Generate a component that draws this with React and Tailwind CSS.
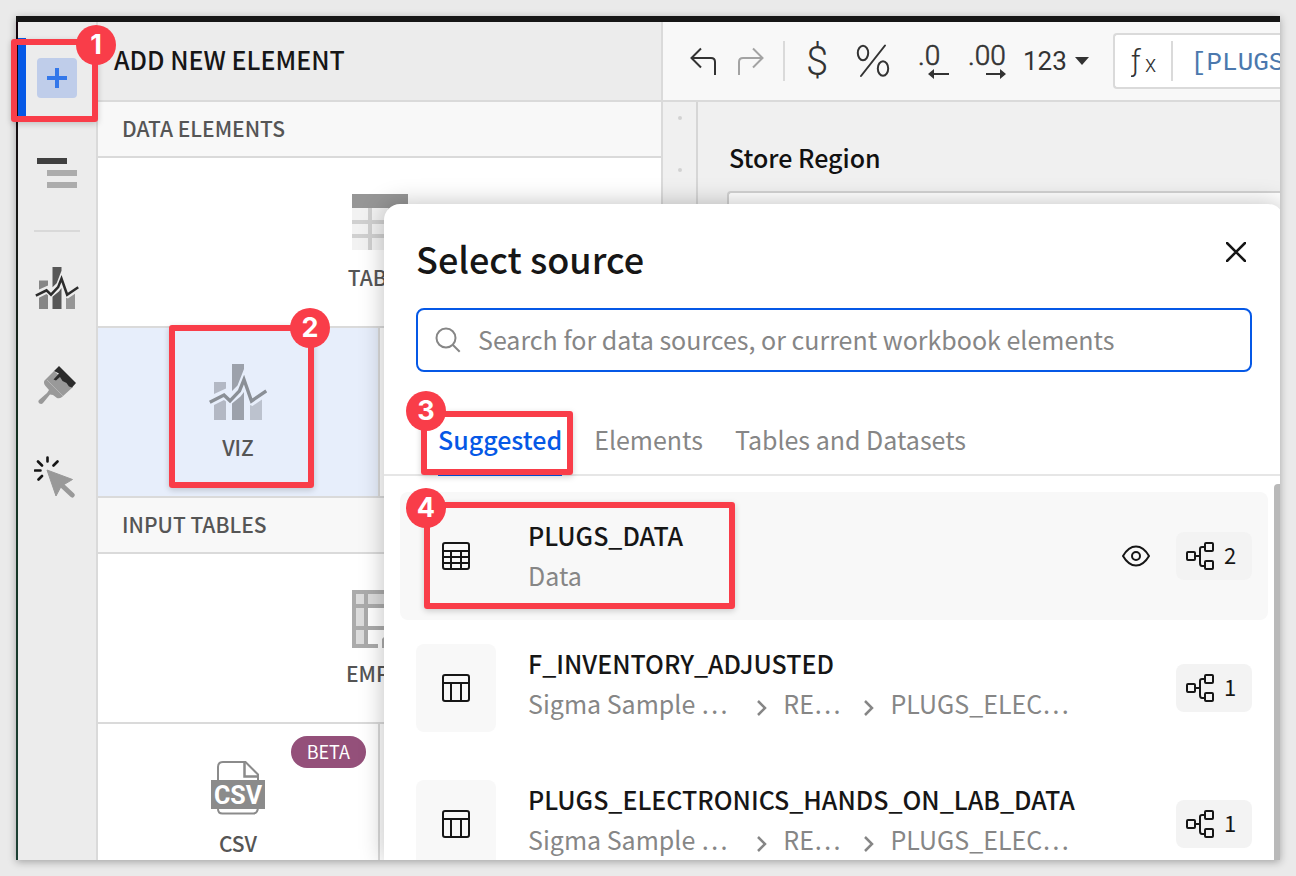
import React from "react";

function VizIcon({ className, line, a, b, c }) {
  return (
    <svg viewBox="0 0 58 56" className={className} aria-hidden="true">
      <path d="M5 18h12v6.500l-12 5.500zM5 41l10-5 2 1.500V56H5z" fill={a} />
      <path d="M23 0h12v5l-6.500 16.500L23 27zM23 39.500l8.500-7L35 28v28H23z" fill={b} />
      <path d="M41 41l2.500 1L53 35.500V56H41z" fill={c} />
      <path d="M.8 38.200 15 31l6 5.800 9.500-10L35 15.500l7.500 21.500L57.300 27" fill="none" stroke={line} strokeWidth="3.400" />
    </svg>
  );
}

function BrushIcon() {
  return (
    <svg viewBox="0 0 38 38" className="h-[38px] w-[38px]" aria-hidden="true">
      <path d="M16 5 6.500 14.500Q5 17 7.500 20l3.500 4-2 3-8 7Q-.5 36 1.500 37.500q2 1.200 3.500-.5L12 28.500l3 .5 4 3q2.500.8 5-1L35 21z" fill="#999" />
      <path d="M21 0l17 17-4 4.500-3-1-2.500-3.500-4-2L22 11l-4 3.500-2.500-1L21 7.500 16 5z" fill="#2c2c2c" />
      <path d="M9 14l16 16" stroke="#c4c4c4" strokeWidth=".6" />
    </svg>
  );
}

function ClickIcon() {
  return (
    <svg viewBox="0 0 42 42" className="h-[42px] w-[42px]" aria-hidden="true">
      <path d="M13 14 38.500 23.500 30 28.500 26.500 31.500 22 40z" fill="#999" stroke="#999" strokeLinejoin="round" />
      <path d="M28 29.500 38.200 39" stroke="#999" strokeWidth="5" strokeLinecap="round" />
      <path d="M13.500 1.500v4M4 5.500l4 4M23.500 5.500l-4 4M1 14.500h5.500M8 20l-3.500 3.500" stroke="#151515" strokeWidth="2.600" strokeLinecap="round" />
    </svg>
  );
}

function TableIcon() {
  return (
    <svg viewBox="0 0 56 56" className="h-14 w-14" aria-hidden="true">
      <path d="M0 14h56v42H0z" fill="#f2f2f2" />
      <path d="M18 14v42M38 14v42M0 28h56M0 42h56" stroke="#d0d0d0" strokeWidth="4" />
      <path d="M0 0h56v14H0z" fill="#969696" />
    </svg>
  );
}

function EmptyIcon() {
  return (
    <svg viewBox="0 0 56 58" className="-mb-0.5 h-[58px] w-14" aria-hidden="true">
      <path d="M2 2h52v14H14v40H2z" fill="#dcdcdc" />
      <path d="M26 56H2V2h52v26M14 2v54M2 16h52M2 38h38" fill="none" stroke="#ababab" strokeWidth="4" />
      <path d="M30 58v-9l18-18 8 8-18 19z" fill="#ababab" />
    </svg>
  );
}

function CsvIcon() {
  return (
    <svg viewBox="0 0 54 56" className="h-14 w-[54px]" aria-hidden="true">
      <path d="M7 24V7q0-5 5-5h22.500L47 14.500V46q0 7.500-4.500 7.500h-31Q7 53.500 7 49z" fill="#fff" stroke="#8b8b8b" strokeWidth="2" />
      <path d="M33.500 2v14.500H47" fill="none" stroke="#8b8b8b" strokeWidth="2.500" />
      <path d="M0 20h54v29H0z" fill="#8b8b8b" />
      <text x="27" y="44" textAnchor="middle" fill="#fff" fontFamily="'Liberation Sans Narrow', Roboto, sans-serif" fontWeight="700" fontSize="25">CSV</text>
    </svg>
  );
}

function GridIcon({ dense }) {
  return (
    <svg viewBox="0 0 28 28" className="h-7 w-7" fill="none" stroke="#161616" strokeWidth="2" aria-hidden="true">
      <rect x="1" y="1" width="26" height="26" rx="2" />
      <path d={dense ? "M1 9h26M1 15h26M1 21h26M9 9v18M19 9v18" : "M1 9h26M9 9v18M19 9v18"} />
    </svg>
  );
}

function LineageIcon() {
  return (
    <svg viewBox="0 0 28 28" className="h-7 w-7" fill="none" stroke="#161616" strokeWidth="2" aria-hidden="true">
      <rect x="1" y="10" width="8" height="8" rx="1" />
      <rect x="19" y="1" width="8" height="8" rx="1" />
      <rect x="19" y="19" width="8" height="8" rx="1" />
      <path d="M9 14h5M19 5h-3q-2 0-2 2v14q0 3 2 3h3" />
    </svg>
  );
}

function EyeIcon() {
  return (
    <svg viewBox="0 0 28 28" className="h-7 w-7" fill="none" stroke="#161616" strokeWidth="2" aria-hidden="true">
      <path d="M1 14Q6.500 4.500 14 4.500T27 14Q21.500 23.500 14 23.500T1 14z" strokeLinejoin="round" />
      <circle cx="14" cy="14" r="4" />
    </svg>
  );
}

function Tile({ icon, label, active, badge, divided }) {
  return (
    <button
      className={
        "relative flex h-full flex-col items-center gap-[13px] pt-9 " +
        (active ? "bg-[#e7eefb] " : "bg-white ") +
        (divided ? "w-[282px] border-r-2 border-[#dadada]" : "w-full")
      }
    >
      {icon}
      <span className="text-[21px] leading-7 font-medium text-[#555]">{label}</span>
      {badge && (
        <span className="absolute top-3 right-3 flex h-8 items-center rounded-full bg-[#94507a] px-4 pb-0.5 text-[18px] leading-6 text-white">
          {badge}
        </span>
      )}
    </button>
  );
}

function SectionTitle({ children }) {
  return (
    <h3 className="flex h-14 shrink-0 items-center border-b-2 border-[#dadada] bg-[#f8f8f8] px-6 pb-0.5 text-[21px] leading-7 font-medium text-[#555]">
      {children}
    </h3>
  );
}

function Chevron() {
  return (
    <svg viewBox="0 0 10 16" className="mt-2.5 h-4 w-2.5 shrink-0" fill="none" stroke="#868686" strokeWidth="2.500" aria-hidden="true">
      <path d="M1 1l7 7-7 7" />
    </svg>
  );
}

function SourceRow({ name, path, count, selected }) {
  return (
    <li className={"flex items-center rounded-lg px-4 " + (selected ? "h-32 bg-[#f8f8f8]" : "h-[136px]")}>
      <span className="flex h-[88px] w-20 shrink-0 items-center justify-center rounded-lg bg-[#f8f8f8]">
        <GridIcon dense={selected} />
      </span>
      <a href="#source" className={"ml-8 min-w-0 flex-1 " + (selected ? "pb-0.5" : "pb-2.5")}>
        <span className="block text-[25px] leading-10 font-medium text-[#161616]">{name}</span>
        <span className="flex h-10 items-center text-[25px] leading-10 text-[#868686]">
          {path.map((part, i) => (
            <React.Fragment key={part}>
              {i > 0 && <span className={i === 1 ? "mr-4 ml-[30px]" : "mr-4 ml-6"}><Chevron /></span>}
              <span>{part}</span>
            </React.Fragment>
          ))}
        </span>
      </a>
      {selected && (
        <button aria-label="Preview" className="mr-6 p-0.5">
          <EyeIcon />
        </button>
      )}
      <button className="flex h-12 w-[76px] shrink-0 items-center gap-2.5 rounded-lg bg-[#f3f3f3] pl-2.5 text-[22px] leading-8 text-[#161616]">
        <LineageIcon />
        <span className="pb-1">{count}</span>
      </button>
    </li>
  );
}

function Callout({ n, box, dot }) {
  return (
    <div className={"pointer-events-none absolute rounded-[3px] border-6 border-[#f93d49] shadow-[0_2px_6px_rgba(0,0,0,0.18)] " + box}>
      <span
        className={
          "absolute flex h-10 w-10 items-center justify-center rounded-full bg-[#f93d49] font-[Inter,sans-serif] text-[27px] leading-8 font-bold text-white " +
          dot
        }
      >
        {n}
      </span>
    </div>
  );
}

function Sidebar() {
  return (
    <nav className="flex w-20 shrink-0 flex-col items-stretch border-r-2 border-[#dadada] bg-[#ececec] pt-4">
      <button aria-label="Add new element" className="flex h-[78px] items-center justify-center border-l-8 border-[#0558e6] pt-0.5 pr-2">
        <span className="flex h-10 w-10 items-center justify-center rounded bg-[#bfcdea]">
          <svg viewBox="0 0 20 20" className="h-5 w-5" aria-hidden="true">
            <path d="M10 0v20M0 10h20" stroke="#3377ea" strokeWidth="4" />
          </svg>
        </span>
      </button>
      <button aria-label="Page outline" className="flex h-[114px] items-center justify-center">
        <svg viewBox="0 0 40 30" className="h-[30px] w-10" aria-hidden="true">
          <path d="M0 0h30v6H0z" fill="#404040" />
          <path d="M10 12h30v6H10zM10 24h30v6H10z" fill="#acacac" />
        </svg>
      </button>
      <hr className="mx-4 border-t-2 border-[#d9d9d9]" />
      <button aria-label="Chart" className="flex h-28 items-center justify-center">
        <VizIcon className="h-[42px] w-11" line="#2c2c2c" a="#868686" b="#575757" c="#969696" />
      </button>
      <button aria-label="Format" className="flex h-20 items-center justify-center pt-0.5">
        <BrushIcon />
      </button>
      <button aria-label="Actions" className="flex h-26 items-center justify-center pt-0.5 pr-1">
        <ClickIcon />
      </button>
    </nav>
  );
}

function ElementPanel() {
  return (
    <section className="flex w-[565px] shrink-0 flex-col border-r-2 border-[#dadada] bg-white">
      <h2 className="flex h-20 shrink-0 items-center border-b-2 border-[#dadada] bg-[#ececec] px-4 pb-1 text-[25px] leading-8 font-medium text-[#161616]">
        ADD NEW ELEMENT
      </h2>
      <SectionTitle>DATA ELEMENTS</SectionTitle>
      <div className="h-[170px] shrink-0 border-b-2 border-[#dadada]">
        <Tile icon={<TableIcon />} label="TABLE" />
      </div>
      <div className="h-[170px] shrink-0 border-b-2 border-[#dadada]">
        <Tile
          active
          divided
          icon={<VizIcon className="h-14 w-[58px]" line="#8a8f96" a="#b3b8c4" b="#9ca1ab" c="#bcc2ce" />}
          label="VIZ"
        />
      </div>
      <SectionTitle>INPUT TABLES</SectionTitle>
      <div className="h-[170px] shrink-0 border-b-2 border-[#dadada]">
        <Tile icon={<EmptyIcon />} label="EMPTY" />
      </div>
      <div className="h-[170px] shrink-0">
        <Tile divided icon={<CsvIcon />} label="CSV" badge="BETA" />
      </div>
    </section>
  );
}

function Toolbar() {
  return (
    <div className="flex h-20 shrink-0 items-center border-b-2 border-[#dadada] bg-[#f8f8f8] pl-4 font-[Roboto,sans-serif] font-light text-[#333]">
      <button aria-label="Undo" className="flex w-12 shrink-0 justify-center">
        <svg viewBox="0 0 26 28" className="h-7 w-[26px]" fill="none" stroke="#333" strokeWidth="2" aria-hidden="true">
          <path d="M11 1.500 1.500 11 11 20.500M1.500 11H21q4 0 4 4V28" />
        </svg>
      </button>
      <button aria-label="Redo" className="flex w-12 shrink-0 justify-center">
        <svg viewBox="0 0 26 28" className="h-7 w-[26px]" fill="none" stroke="#a3a3a3" strokeWidth="2" aria-hidden="true">
          <path d="M15 1.500l9.500 9.500-9.500 9.500M24.500 11H5q-4 0-4 4V28" />
        </svg>
      </button>
      <span className="mx-2 h-10 w-0.5 shrink-0 bg-[#dadada]" />
      <button className="w-12 shrink-0 pt-0.5 text-[40px] leading-12">$</button>
      <button aria-label="Percent" className="flex w-16 shrink-0 justify-center">
        <svg viewBox="0 0 34 34" className="h-[34px] w-[34px]" fill="none" stroke="#333" strokeWidth="2" strokeLinecap="round" aria-hidden="true">
          <ellipse cx="7" cy="9" rx="5.200" ry="7.200" />
          <ellipse cx="27" cy="24.500" rx="5.200" ry="7.200" />
          <path d="M29 1.500 5 32" />
        </svg>
      </button>
      <button aria-label="Decrease decimals" className="flex w-[58px] shrink-0 justify-center">
        <svg viewBox="0 0 32 52" className="h-13 w-8" fill="#333" aria-hidden="true">
          <text x="0" y="30" fontSize="28" stroke="#333" strokeWidth=".6">.0</text>
          <path d="M16 38h15v2H16v4l-6-5 6-5z" />
        </svg>
      </button>
      <button aria-label="Increase decimals" className="flex w-12 shrink-0 justify-center">
        <svg viewBox="0 0 38 52" className="h-13 w-[38px]" fill="#333" aria-hidden="true">
          <text x="0" y="30" fontSize="28" stroke="#333" strokeWidth=".6">.00</text>
          <path d="M32 38H18v2h14v4l6-5-6-5z" />
        </svg>
      </button>
      <button className="ml-3 flex shrink-0 items-center gap-2 text-[26px] leading-8 font-normal">
        123
        <svg viewBox="0 0 14 8" className="h-2 w-3.5" fill="#333" aria-hidden="true">
          <path d="M0 0h14L7 8z" />
        </svg>
      </button>
      <div className="ml-6 flex h-14 min-w-0 flex-1 items-center overflow-hidden rounded-l border-2 border-r-0 border-[#dadada] bg-white">
        <svg viewBox="0 0 26 48" className="ml-4 h-12 w-[26px] shrink-0" fill="#333" role="img" aria-label="Formula">
          <text x="0" y="34" fontSize="30">ƒ</text>
          <text x="14" y="35" fontSize="23">x</text>
        </svg>
        <span className="mx-3.5 h-10 w-0.5 shrink-0 bg-[#dadada]" />
        <code className="pt-1 pl-1 font-['Liberation_Mono',monospace] text-[26px] leading-8 font-normal whitespace-nowrap text-[#4b78ad]">
          [PLUGS
        </code>
      </div>
    </div>
  );
}

function Workspace() {
  return (
    <main className="flex min-w-0 flex-1 flex-col bg-[#f0f0f0]">
      <Toolbar />
      <div className="flex min-h-0 flex-1">
        <div className="flex w-[35px] shrink-0 flex-col items-center gap-12 border-r-2 border-[#d6d6d6] pt-3.5">
          <span className="h-1 w-1 rounded-full bg-[#d2d2d2]" />
          <span className="h-1 w-1 rounded-full bg-[#d2d2d2]" />
        </div>
        <div className="flex min-w-0 flex-1 flex-col pt-[39px] pl-[29px]">
          <label htmlFor="region" className="pl-0.5 text-[25px] leading-8 font-medium text-[#111]">
            Store Region
          </label>
          <input id="region" className="mt-[18px] h-16 rounded-l border-2 border-r-0 border-[#d2d2d2] bg-white" />
        </div>
      </div>
    </main>
  );
}

const SOURCES = [
  { name: "PLUGS_DATA", path: ["Data"], count: 2, selected: true },
  { name: "F_INVENTORY_ADJUSTED", path: ["Sigma Sample …", "RE…", "PLUGS_ELEC…"], count: 1 },
  { name: "PLUGS_ELECTRONICS_HANDS_ON_LAB_DATA", path: ["Sigma Sample …", "RE…", "PLUGS_ELEC…"], count: 1 },
];

function SourceDialog() {
  return (
    <div
      role="dialog"
      aria-label="Select source"
      className="absolute top-[188px] -right-1 bottom-0 left-[368px] flex flex-col overflow-hidden rounded-t-2xl bg-white shadow-[0_0_24px_rgba(0,0,0,0.25)]"
    >
      <div className="flex items-start justify-between px-8 pt-[30px]">
        <h1 className="text-[36px] leading-12 font-medium text-[#161616]">Select source</h1>
        <button aria-label="Close" className="mt-0.5 p-1.5">
          <svg viewBox="0 0 20 20" className="h-5 w-5" stroke="#161616" strokeWidth="2.500" strokeLinecap="round" aria-hidden="true">
            <path d="M1 1l18 18M19 1 1 19" />
          </svg>
        </button>
      </div>
      <label className="mx-8 mt-[26px] flex h-16 shrink-0 items-center gap-4 rounded-lg border-2 border-[#0558e6] px-4">
        <svg viewBox="0 0 28 28" className="h-7 w-7 shrink-0" fill="none" stroke="#868686" strokeWidth="2" aria-hidden="true">
          <circle cx="12" cy="12" r="9.500" />
          <path d="M18.700 18.700l7 7" />
        </svg>
        <input
          type="text"
          aria-label="Search"
          placeholder="Search for data sources, or current workbook elements"
          className="h-10 min-w-0 flex-1 pb-0.5 text-[25px] text-[#161616] outline-none placeholder:text-[#868686]"
        />
      </label>
      <div role="tablist" className="mt-8 flex h-[72px] shrink-0 gap-8 border-b-2 border-[#e6e6e6] px-[54px] text-[25px] leading-8 text-[#868686]">
        <button role="tab" aria-selected="true" className="-mb-0.5 border-b-2 border-[#0558e6] font-medium text-[#0558e6]">
          Suggested
        </button>
        <button role="tab" aria-selected="false">Elements</button>
        <button role="tab" aria-selected="false">Tables and Datasets</button>
      </div>
      <ul className="mx-4 flex flex-col pt-4">
        {SOURCES.map((s) => (
          <SourceRow key={s.name} {...s} />
        ))}
      </ul>
      <div className="absolute top-[280px] right-0 bottom-0 w-2.5 rounded-t bg-[#b9b9b9]" />
    </div>
  );
}

export default function App() {
  return (
    <div className="relative h-screen overflow-hidden bg-[#eaeaea] p-4 font-['Noto_Sans_CJK_SC',sans-serif]">
      <div className="relative flex h-full flex-col overflow-hidden bg-white shadow-[0_2px_8px_rgba(0,0,0,0.3)]">
        <div className="h-1.5 shrink-0 bg-[#161616]" />
        <div className="flex min-h-0 flex-1">
          <div className="w-0.5 shrink-0 bg-linear-to-b from-[#12040c] via-[#123020] to-[#1d4034]" />
          <Sidebar />
          <ElementPanel />
          <Workspace />
        </div>
        <SourceDialog />
      </div>
      <Callout n="1" box="top-[39px] left-[11px] h-[83px] w-[87px]" dot="-top-5 -right-6" />
      <Callout n="2" box="top-[325px] left-[169px] h-[163px] w-[145px]" dot="-top-[23px] -right-[22px]" />
      <Callout n="3" box="top-[411px] left-[421px] h-16 w-[152px]" dot="-top-[26px] -left-[21px]" />
      <Callout n="4" box="top-[502px] left-[424px] h-[107px] w-[311px]" dot="-top-5 -left-6" />
    </div>
  );
}
